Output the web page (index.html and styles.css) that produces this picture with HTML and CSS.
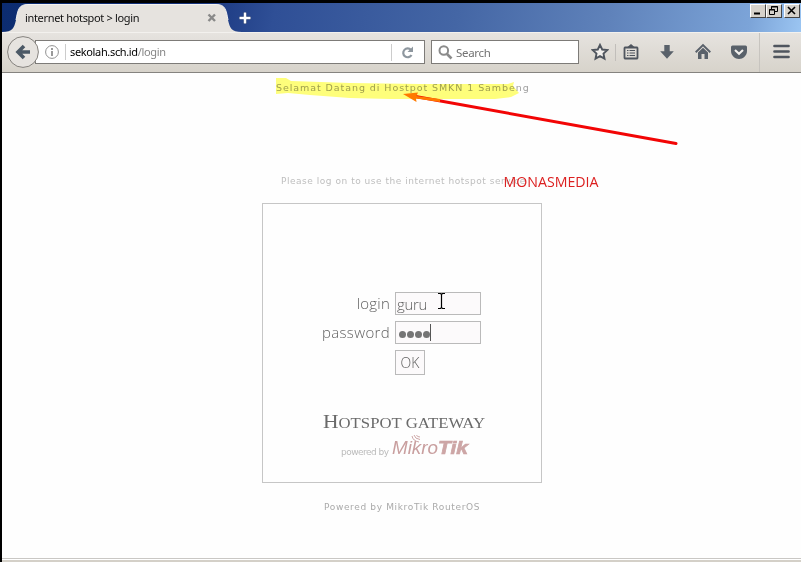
FILE: index.html
```html
<!DOCTYPE html>
<html lang="en">
<head>
<meta charset="utf-8">
<title>internet hotspot &gt; login</title>
<link rel="stylesheet" href="styles.css">
</head>
<body>
<div class="window">
  <header class="titlebar">
    <div class="tab">
      <svg class="tab-shape" width="240" height="29" viewBox="2 3 240 29"><path d="M2 32C13 32 14 28 16 20C18 9 19 4.500 28 4.500H216C225 4.500 226 9 228 20C230 28 231 32 242 32Z" fill="#e6e3df"/><path d="M16 20C18 9 19 4.500 28 4.500H216C225 4.500 226 9 228 20" fill="none" stroke="#f5f3f0"/></svg>
      <span class="tab-title">internet hotspot &gt; login</span>
      <svg class="tab-close" width="10" height="10" viewBox="0 0 10 10"><path d="M1.500 1.500L8 8M8 1.500L1.500 8" stroke="#898989" stroke-width="2.400"/></svg>
    </div>
    <svg class="newtab" width="12" height="12" viewBox="0 0 12 12"><path d="M6 0V12M0 6H12" stroke="#223b75" stroke-width="4"/><path d="M6 .5V11.500M.5 6H11.500" stroke="#fff" stroke-width="2.500"/></svg>
    <div class="controls">
      <span class="control"><svg width="15" height="13"><path d="M4 9.500H10" stroke="#000" stroke-width="2"/></svg></span>
      <span class="control"><svg width="15" height="13" fill="none" stroke="#000"><path d="M5.500 5V2.500H11.500V7.500H9M5 3H12M3.500 5.500H8.500V10.500H3.500ZM3 6H9"/></svg></span>
      <span class="control close"><svg width="15" height="13"><path d="M4 3L11 10M11 3L4 10" stroke="#000" stroke-width="1.600"/></svg></span>
    </div>
  </header>
  <nav class="toolbar">
    <div class="back"><svg width="32" height="32" viewBox="7 36 32 32"><circle cx="23" cy="52" r="15.400" fill="#e6e3df" stroke="#85827e"/><path d="M24 46L18 52L24 58M18.500 52H30" fill="none" stroke="#4c5966" stroke-width="3.600"/></svg></div>
    <div class="address">
      <svg class="info" width="14" height="14" viewBox="0 0 14 14"><circle cx="7" cy="7" r="6.400" fill="none" stroke="#929292"/><path d="M7 3V5M7 6V11" stroke="#888" stroke-width="1.700"/></svg>
      <span class="url"><b>sekolah.sch.id</b>/login</span>
      <span class="reload"><svg width="13" height="13" viewBox="0 0 13 13"><path d="M10 4A4.400 4.400 0 1 0 10.500 9" fill="none" stroke="#8e979f" stroke-width="2.200"/><path d="M6.500 6H12V.5Z" fill="#8e979f"/></svg></span>
    </div>
    <div class="search"><svg width="15" height="15" viewBox="0 0 15 15" fill="none" stroke="#8b8b8b"><circle cx="5.800" cy="5.500" r="4.300" stroke-width="2"/><path d="M9 9L13.500 13.500" stroke-width="2.700"/></svg><span>Search</span></div>
    <div class="actions">
      <svg class="action" width="18" height="18" viewBox="0 0 18 18"><path d="M9 1.900L11.200 6.500L16.200 7.100L12.500 10.600L13.500 15.700L9 13.200L4.500 15.700L5.500 10.600L1.800 7.100L6.800 6.500Z" fill="#f1efec" stroke="#4f555e" stroke-width="1.900"/></svg>
      <span class="divider"></span>
      <svg class="action" width="18" height="18" viewBox="0 0 18 18"><path d="M3 4.500H15L15.500 5V15L15 15.500H3L2.500 15V5Z" fill="none" stroke="#4f555e" stroke-width="1.800"/><path d="M5.500 4L9 1L12.500 4Z" fill="#4f555e"/><path d="M5 7.500H6.500M7.500 7.500H13M5 10H6.500M7.500 10H13M5 12.500H6.500M7.500 12.500H13" stroke="#4f555e" stroke-width="1.200"/></svg>
      <svg class="action" width="18" height="18" viewBox="0 0 18 18"><path d="M6.300 2H11.700V8.300H15.800L9 15.800L2.200 8.300H6.300Z" fill="#59616a"/></svg>
      <svg class="action" width="18" height="18" viewBox="0 0 18 18"><path d="M1.700 9.200L9 2L16.300 9.200" fill="none" stroke="#59616a" stroke-width="1.900"/><path d="M4 9.500L9 4.800L14 9.500V16H10.500V11H7.500V16H4Z" fill="#59616a"/></svg>
      <svg class="action" width="18" height="18" viewBox="0 0 18 18"><path d="M1 4Q1 2.500 2.500 2.500H15.500Q17 2.500 17 4V8C17 12.500 13 16 9 16S1 12.500 1 8Z" fill="#59616a"/><path d="M5 7L9 10.800L13 7" fill="none" stroke="#f2f0ed" stroke-width="2.100"/></svg>
    </div>
    <div class="menu"><svg width="17" height="16" viewBox="0 0 17 16"><path d="M1.500 2H15.500M1.500 7.500H15.500M1.500 13H15.500" stroke="#4f555e" stroke-width="2.700" stroke-linecap="round"/></svg></div>
  </nav>
  <main class="page">
    <p class="welcome">Selamat Datang di Hostpot SMKN 1 Sambeng</p>
    <p class="notice">Please log on to use the internet hotspot service</p>
    <section class="panel">
      <form class="login">
        <label>login</label><div class="field">guru</div>
        <label class="pw">password</label><div class="field dots"><i></i><i></i><i></i><i></i><span class="caret"></span></div>
        <div class="ok">OK</div>
      </form>
      <svg class="brand" width="180" height="54" viewBox="312 408 180 54">
        <text x="323" y="428" class="brand-title" textLength="162" lengthAdjust="spacingAndGlyphs"><tspan font-size="18">H</tspan>OTSPOT GATEWAY</text>
        <text x="341" y="455" class="brand-by" textLength="48">powered by</text>
        <text x="392" y="454" class="mikro" textLength="46" lengthAdjust="spacingAndGlyphs">Mikro</text>
        <text x="438" y="454" class="tik" textLength="30" lengthAdjust="spacingAndGlyphs">Tik</text>
        <path d="M412 436Q413 441 419 442M414 435Q415 439 420 439.500M416.500 435Q417 437 420 437" fill="none" stroke="#cda6a6"/>
      </svg>
    </section>
    <p class="footer">Powered by MikroTik RouterOS</p>
  </main>
  <div class="statusbar"></div>
</div>
<svg class="annotations" width="801" height="562" viewBox="0 0 801 562">
  <path class="marker" d="M276 78L286 78L291 81L350 83L420 84L508 84L514 82L513 86L519 93L511 97L495 99H390L350 98L310 95L288 93L276 94Z"/>
  <path d="M410 95.500L676 143.500" stroke="#f20505" stroke-width="3" stroke-linecap="round"/>
  <path d="M403 94L418 92.500L416.500 96L440 99L440 102L416 98.500L416.500 102Z" fill="#ff7a00"/>
  <text x="503.500" y="187" class="watermark" textLength="95" lengthAdjust="spacingAndGlyphs">MONASMEDIA</text>
  <path d="M438 293.500H440.500L441.500 294.500L442.500 293.500H445M441.500 294V308M438 308.500H440.500L441.500 307.500L442.500 308.500H445" fill="none" stroke="#000" stroke-width="1.200"/>
</svg>
</body>
</html>
```
FILE: styles.css
```css
* { box-sizing: border-box; }
body { margin: 0; width: 801px; height: 562px; overflow: hidden; background: #000; font-family: "DejaVu Sans", sans-serif; }
svg { display: block; flex: none; }
p { margin: 0; }
.window { height: 562px; padding: 3px 0 0 2px; display: flex; flex-direction: column; }
.titlebar { height: 29px; flex: none; display: flex; background: linear-gradient(100deg, #0c2c70 0, #14317a 180px, #2f4f96 270px, #4466a5 450px, #5f82ba 600px, #7ca4d8 740px, #9bc5f2 100%); }
.tab { position: relative; width: 236px; display: flex; align-items: center; padding: 0 0 0 23px; }
.tab-shape { position: absolute; left: 0; top: 0; }
.tab-title { position: relative; width: 182px; font: 11px "Noto Sans", sans-serif; letter-spacing: -.33px; color: #111; }
.tab-close { position: relative; }
.newtab { margin: 9px 0 0 1px; }
.controls { margin: 1px 1px 0 auto; display: flex; }
.control { width: 16px; height: 14px; background: #d6d2cb; border: 1px solid; border-color: #fff #444 #444 #fff; overflow: hidden; }
.close { margin-left: 2px; }
.control svg { margin: -1px 0 0 -1px; }
.toolbar { height: 41px; flex: none; display: flex; align-items: center; padding-left: 5px; background: linear-gradient(#e6e3df, #d7d3cb); border-top: 1px solid #f3f1ee; border-bottom: 1px solid #85837f; }
.back { position: relative; z-index: 1; margin-top: -1px; }
.address { display: flex; align-items: center; width: 390px; height: 24px; margin: -1px 0 0 -4px; padding-left: 9px; border: 1px solid #7d7b78; background: #fff; }
.url { flex: 1; margin-left: 6px; padding-left: 4px; border-left: 1px solid #ccc; font: 11px/16px "Noto Sans", sans-serif; letter-spacing: -.35px; color: #858585; }
.url b { font-weight: 400; color: #000; }
.reload { width: 33px; height: 17px; padding: 2px 0 0 9px; border-left: 1px solid #ccc; }
.search { display: flex; align-items: center; gap: 3px; width: 148px; height: 24px; margin: -1px 0 0 6px; padding-left: 6px; border: 1px solid #7d7b78; background: #fff; color: #727272; font: 11.500px "Noto Sans", sans-serif; letter-spacing: -.3px; }
.actions { display: flex; align-items: center; gap: 18px; margin: -1px 0 0 12px; }
.divider { width: 1px; height: 17px; margin: 0 -12px; background: #c1beba; }
.menu { margin-left: 11px; padding: 11px 0 0 13px; height: 39px; border-left: 1px solid #c7c4bf; }
.page { flex: 1; min-height: 0; display: flex; flex-direction: column; align-items: flex-start; background: #fefefe; font-family: "DejaVu Sans", sans-serif; white-space: nowrap; }
.welcome, .notice, .footer { font-size: 9.500px; line-height: 14px; }
.welcome { margin: 8px 0 0 274px; color: #a0a0a0; letter-spacing: .93px; }
.notice { margin: 79px 0 0 279px; color: #bebebe; font-size: 9px; letter-spacing: .53px; }
.panel { width: 280px; height: 280px; margin: 15px 0 0 260px; padding-top: 88px; border: 1px solid #c6c6c6; }
.login { display: grid; grid-template-columns: 127px 86px; column-gap: 5px; row-gap: 6px; margin: 0; color: #606060; font: 300 15px/23px "Open Sans", sans-serif; }
label { text-align: right; letter-spacing: .2px; }
.pw { letter-spacing: .35px; }
.field { height: 23px; line-height: 22px; padding-left: 1px; border: 1px solid #bababa; background: #fcfafb; letter-spacing: -.3px; }
.dots { display: flex; align-items: center; gap: 1px; padding: 3px 0 0 3px; }
.dots i { width: 7px; height: 7px; background: #757575; border-radius: 50%; }
.caret { width: 1px; height: 17px; margin: -3px 0 0 -1px; background: #555; }
.ok { grid-column: 2; width: 30px; height: 25px; border: 1px solid #bababa; background: #fcfafb; font-size: 14px; line-height: 24px; text-align: center; }
.brand { margin: 33px 0 0 49px; }
.brand-title { font: 14px "Liberation Serif", serif; fill: #6a6a6a; }
.brand-by { font: 9px "DejaVu Sans", sans-serif; fill: #bbb; }
.mikro { font: italic 18px "Liberation Sans", sans-serif; fill: #c99f9f; }
.tik { font: italic bold 18px "Liberation Sans", sans-serif; fill: #cda6a6; stroke: #cda6a6; stroke-width: .7px; }
.footer { margin: 17px 0 0 322px; color: #aaa; font-size: 9px; letter-spacing: .65px; }
.statusbar { height: 4px; flex: none; background: #d4d0c8; border-top: 1px solid #c9c7c4; box-shadow: inset 0 1px #fff; }
.annotations { position: absolute; left: 0; top: 0; }
.marker { fill: #ffff7b; mix-blend-mode: multiply; }
.watermark { font: 14px "Open Sans", sans-serif; fill: #dc2020; }
```
